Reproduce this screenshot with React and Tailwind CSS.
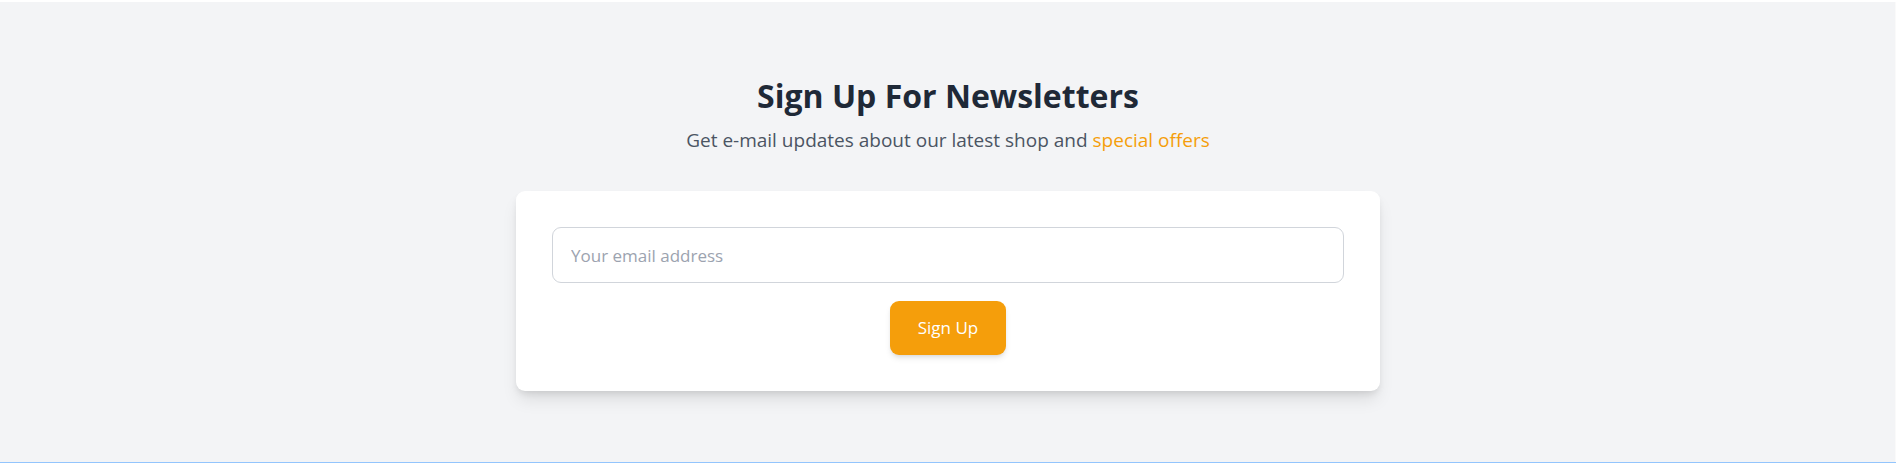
export default function App() {
  return (
    <section className="border-t-2 border-b border-t-white border-b-[#93c5fd] bg-[#f3f4f6] pt-[72px] pb-[71px] font-['Segoe_UI','Open_Sans',sans-serif] shadow-[inset_-1px_0_0_#fafafa]">
      <div className="mx-auto max-w-[864px] text-center">
        <h2 className="mb-2 text-[32px] leading-[44px] font-bold text-[#1f2937]">Sign Up For Newsletters</h2>
        <p className="mb-9 text-[19px] leading-[29px] text-[#4b5563]">
          Get e-mail updates about our latest shop and <a href="#offers" className="text-[#f59e0b]">special offers</a>
        </p>
        <form className="flex flex-col items-center gap-[18px] rounded-[9px] bg-white p-9 shadow-[0_11px_17px_-3px_rgba(0,0,0,0.1),0_4px_7px_-2px_rgba(0,0,0,0.1)]">
          <input aria-label="Email address" type="email" placeholder="Your email address" className="h-14 w-full rounded-[9px] border border-[#d1d5db] px-[18px] text-[17px] placeholder:text-[#9ca3af]" />
          <button type="submit" className="h-[54px] rounded-[9px] bg-[#f59e0b] px-7 text-[17px] text-white shadow-md">Sign Up</button>
        </form>
      </div>
    </section>
  );
}
